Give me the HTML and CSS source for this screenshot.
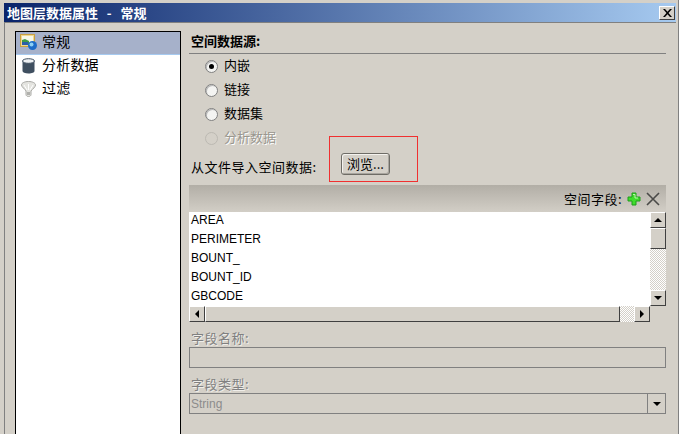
FILE: index.html
```html
<!DOCTYPE html>
<html lang="zh-CN">

<head>
    <meta charset="UTF-8">
    <title>地图层数据属性 - 常规</title>
    <link rel="stylesheet" href="styles.css">
</head>

<body>
    <div class="window">
        <div class="titlebar">
            <span class="title-text">地图层数据属性   -   常规</span>
            <button class="close-btn"><svg width="9" height="8" viewBox="0 0 9 8"><path d="M0 0h2l2.500 2.700L7 0h2L5.500 4 9 8H7L4.500 5.300 2 8H0l3.500-4z" fill="#000"/></svg></button>
        </div>

        <div class="main">
            <div class="nav">
                <div class="nav-item selected">
                    <svg class="nav-icon" width="17" height="16" viewBox="0 0 17 16">
                        <rect x="0.500" y="0.500" width="14" height="12" fill="#f0d890" stroke="#c8a040"/>
                        <rect x="2" y="2" width="11" height="9" fill="#f6f8e8"/>
                        <path d="M2 6l3-1 4 2v4H2z" fill="#3e9a48"/>
                        <path d="M2 8h6v3H2z" fill="#2c5ea8"/>
                        <circle cx="12.500" cy="11.500" r="4.500" fill="#1c6cc8"/>
                        <circle cx="11.500" cy="10.500" r="2" fill="#8cd0f4"/>
                    </svg>
                    <span>常规</span>
                </div>
                <div class="nav-item">
                    <svg class="nav-icon" width="14" height="16" viewBox="0 0 14 16">
                        <path d="M1 3v10c0 1.500 2.500 2.500 6 2.500s6-1 6-2.500V3z" fill="#3f4f60"/>
                        <ellipse cx="7" cy="3" rx="6" ry="2.300" fill="#eef1f4" stroke="#3f4f60"/>
                    </svg>
                    <span>分析数据</span>
                </div>
                <div class="nav-item">
                    <svg class="nav-icon" width="15" height="16" viewBox="0 0 15 16">
                        <path d="M0.500 4c0-2 3-3.500 7-3.500s7 1.500 7 3.500c0 2-3 4-4.500 6v3.500c0 1.500-1.500 2-2.500 2s-2.500-.5-2.500-2V10C4 8 .5 6 .5 4z" fill="#e4e4e0" stroke="#a8a8a4"/>
                        <path d="M3 4l3 5M7.500 3v6M12 4L9 9" stroke="#fff" fill="none"/>
                        <rect x="6" y="11" width="3" height="3" fill="#b0b0ac"/>
                    </svg>
                    <span>过滤</span>
                </div>
            </div>

            <div class="content">
                <div class="section-head">空间数据源:</div>

                <div class="radios">
                    <div class="radio-row"><span class="radio checked"></span><span class="radio-text">内嵌</span></div>
                    <div class="radio-row"><span class="radio"></span><span class="radio-text">链接</span></div>
                    <div class="radio-row"><span class="radio"></span><span class="radio-text">数据集</span></div>
                    <div class="radio-row disabled"><span class="radio"></span><span class="radio-text">分析数据</span></div>
                </div>

                <div class="import-row">
                    <span class="import-label">从文件导入空间数据:</span>
                    <button class="browse-btn">浏览...</button>
                </div>

                <div class="fields-bar">
                    <span>空间字段:</span>
                    <svg class="bar-icon" width="14" height="14" viewBox="0 0 14 14">
                        <path d="M5 1h4v4h4v4H9v4H5V9H1V5h4z" fill="#3fdc2c" stroke="#1e9e1a"/>
                        <path d="M6 2.500h2v3.500h3" stroke="#b8f8a8" fill="none"/>
                    </svg>
                    <svg class="bar-icon" width="14" height="14" viewBox="0 0 14 14">
                        <path d="M1 1l12 12M13 1L1 13" stroke="#4a4a48" stroke-width="1.600" fill="none"/>
                    </svg>
                </div>

                <div class="list-wrap">
                    <div class="list">
                        <div class="list-item">AREA</div>
                        <div class="list-item">PERIMETER</div>
                        <div class="list-item">BOUNT_</div>
                        <div class="list-item">BOUNT_ID</div>
                        <div class="list-item">GBCODE</div>
                    </div>
                    <div class="vscroll">
                        <div class="sb-btn"><span class="arrow up"></span></div>
                        <div class="sb-btn v-thumb"></div>
                        <div class="sb-track"></div>
                        <div class="sb-btn"><span class="arrow down"></span></div>
                    </div>
                </div>

                <div class="hscroll">
                    <div class="sb-btn"><span class="arrow left"></span></div>
                    <div class="sb-btn h-thumb"></div>
                    <div class="sb-track"></div>
                    <div class="sb-btn"><span class="arrow right"></span></div>
                </div>

                <label class="field-label">字段名称:</label>
                <div class="text-box"></div>

                <label class="field-label">字段类型:</label>
                <div class="text-box select-box">
                    <span class="select-value">String</span>
                    <span class="select-arrow"><span class="arrow down"></span></span>
                </div>

                <div class="red-box"></div>
            </div>
        </div>
    </div>
</body>

</html>
```

FILE: styles.css
```css
body {
    margin: 0;
    background: #d4d0c8;
    font-family: "Noto Sans CJK SC", "Liberation Sans", sans-serif;
    font-size: 13px;
    color: #000;
}

.window {
    width: 679px;
    height: 434px;
    box-sizing: border-box;
    padding: 3px 1px 0 4px;
    border-right: 1px solid #808080;
    overflow: hidden;
}

.titlebar {
    height: 19px;
    display: flex;
    align-items: center;
    justify-content: space-between;
    padding: 0 1px 0 3px;
    background: linear-gradient(to right, #0a246a, #a6caf0);
    margin-right: 1px;
    border-bottom: 1px solid #808080;
}

.title-text {
    color: #fff;
    font-weight: bold;
    font-size: 13px;
    line-height: 18px;
    white-space: pre;
}

.close-btn {
    width: 16px;
    height: 14px;
    padding: 0;
    display: flex;
    align-items: center;
    justify-content: center;
    background: #d4d0c8;
    border: 1px solid;
    border-color: #fff #404040 #404040 #fff;
}

.main {
    display: flex;
    height: 411px;
    padding: 8px 0 0 10px;
    border-left: 1px solid #808080;
}

.nav {
    width: 164px;
    height: 410px;
    flex-shrink: 0;
    background: #fff;
    border: 1px solid #000;
}

.nav-item {
    height: 23px;
    box-sizing: border-box;
    display: flex;
    align-items: center;
    gap: 5px;
    padding-left: 4px;
    font-size: 14px;
    letter-spacing: 0.2px;
}

.nav-item span {
    margin-top: -5px;
}

.nav-item.selected {
    background: #a6b1ca;
    border-bottom: 1px solid #a6caf0;
}

.nav-icon {
    width: 17px;
    flex-shrink: 0;
    margin-top: -2px;
}

.content {
    position: relative;
    width: 477px;
    margin-left: 8px;
}

.section-head {
    height: 22px;
    border-bottom: 1px solid #808080;
    padding-left: 2px;
    font-weight: bold;
    font-size: 13px;
    line-height: 19px;
}

.radio-row {
    height: 24px;
    display: flex;
    align-items: center;
    gap: 6px;
    padding-left: 16px;
    font-size: 13px;
}

.radio-text {
    margin-top: -4px;
}

.radio-row.disabled {
    color: #9a978f;
    text-shadow: 1px 1px 0 #fff;
}

.radio {
    width: 13px;
    height: 13px;
    box-sizing: border-box;
    border-radius: 50%;
    border: 1px solid #808080;
    background: #f4f4f2;
    box-shadow: inset 1px 1px 0 #b8b8b8;
    position: relative;
}

.radio.checked::after {
    content: "";
    position: absolute;
    left: 3px;
    top: 3px;
    width: 5px;
    height: 5px;
    border-radius: 50%;
    background: #000;
}

.disabled .radio {
    background: #d4d0c8;
    border-color: #bcb9b2;
    box-shadow: none;
}

.import-row {
    height: 27px;
    display: flex;
    align-items: center;
}

.import-label {
    padding-left: 2px;
    width: 150px;
    letter-spacing: 0.5px;
    white-space: nowrap;
    padding-top: 5px;
}

.browse-btn {
    width: 49px;
    height: 22px;
    padding: 0 0 3px;
    font-family: inherit;
    font-size: 13px;
    background: #d4d0c8;
    border: 1px solid #6e6c66;
    border-radius: 3px;
    box-shadow: inset 1px 1px 0 #f4f2ee, inset -1px -1px 0 #a8a59e;
    color: #000;
}

.fields-bar {
    height: 27px;
    margin-top: 8px;
    display: flex;
    align-items: center;
    justify-content: flex-end;
    gap: 5px;
    padding-right: 6px;
    background: linear-gradient(to bottom, #b2aea6, #d2cec6);
    font-size: 13px;
    letter-spacing: 0.5px;
}

.list-wrap {
    display: flex;
    height: 94px;
}

.list {
    flex: 1;
    background: #fff;
}

.list-item {
    height: 19px;
    padding-left: 2px;
    font-family: "Liberation Sans", sans-serif;
    font-size: 12px;
    line-height: 16px;
}

.vscroll {
    width: 16px;
    display: flex;
    flex-direction: column;
}

.sb-btn {
    width: 16px;
    height: 16px;
    box-sizing: border-box;
    flex-shrink: 0;
    display: flex;
    align-items: center;
    justify-content: center;
    background: #d4d0c8;
    border: 1px solid;
    border-color: #fff #404040 #404040 #fff;
}

.v-thumb {
    height: 21px;
}

.sb-track {
    flex: 1;
    background-color: #f0eeea;
    background-image: repeating-conic-gradient(#d4d0c8 0 25%, #fff 0 50%);
    background-size: 2px 2px;
}

.hscroll {
    display: flex;
    width: 461px;
    height: 16px;
}

.h-thumb {
    width: 415px;
}

.arrow {
    display: block;
    width: 0;
    height: 0;
    border: 4px solid transparent;
}

.arrow.up {
    border-top: 0;
    border-bottom-color: #000;
}

.arrow.down {
    border-bottom: 0;
    border-top-color: #000;
}

.arrow.left {
    border-left: 0;
    border-right-color: #000;
}

.arrow.right {
    border-right: 0;
    border-left-color: #000;
}

.field-label {
    display: block;
    height: 25px;
    line-height: 32px;
    padding-left: 2px;
    color: #808080;
    text-shadow: 1px 1px 0 #f0eeea;
    letter-spacing: 0.5px;
}

.text-box {
    height: 21px;
    box-sizing: border-box;
    border: 1px solid #808080;
}

.select-box {
    display: flex;
    align-items: center;
    justify-content: space-between;
}

.select-value {
    padding-left: 1px;
    font-family: "Liberation Sans", sans-serif;
    font-size: 12px;
    color: #8c8c8c;
}

.select-arrow {
    width: 17px;
    height: 19px;
    display: flex;
    align-items: center;
    justify-content: center;
    border-left: 1px solid #808080;
}

/* annotation drawn over the dialog */
.red-box {
    position: absolute;
    left: 140px;
    top: 105px;
    width: 87px;
    height: 44px;
    border: 1px solid #f03030;
}
```
